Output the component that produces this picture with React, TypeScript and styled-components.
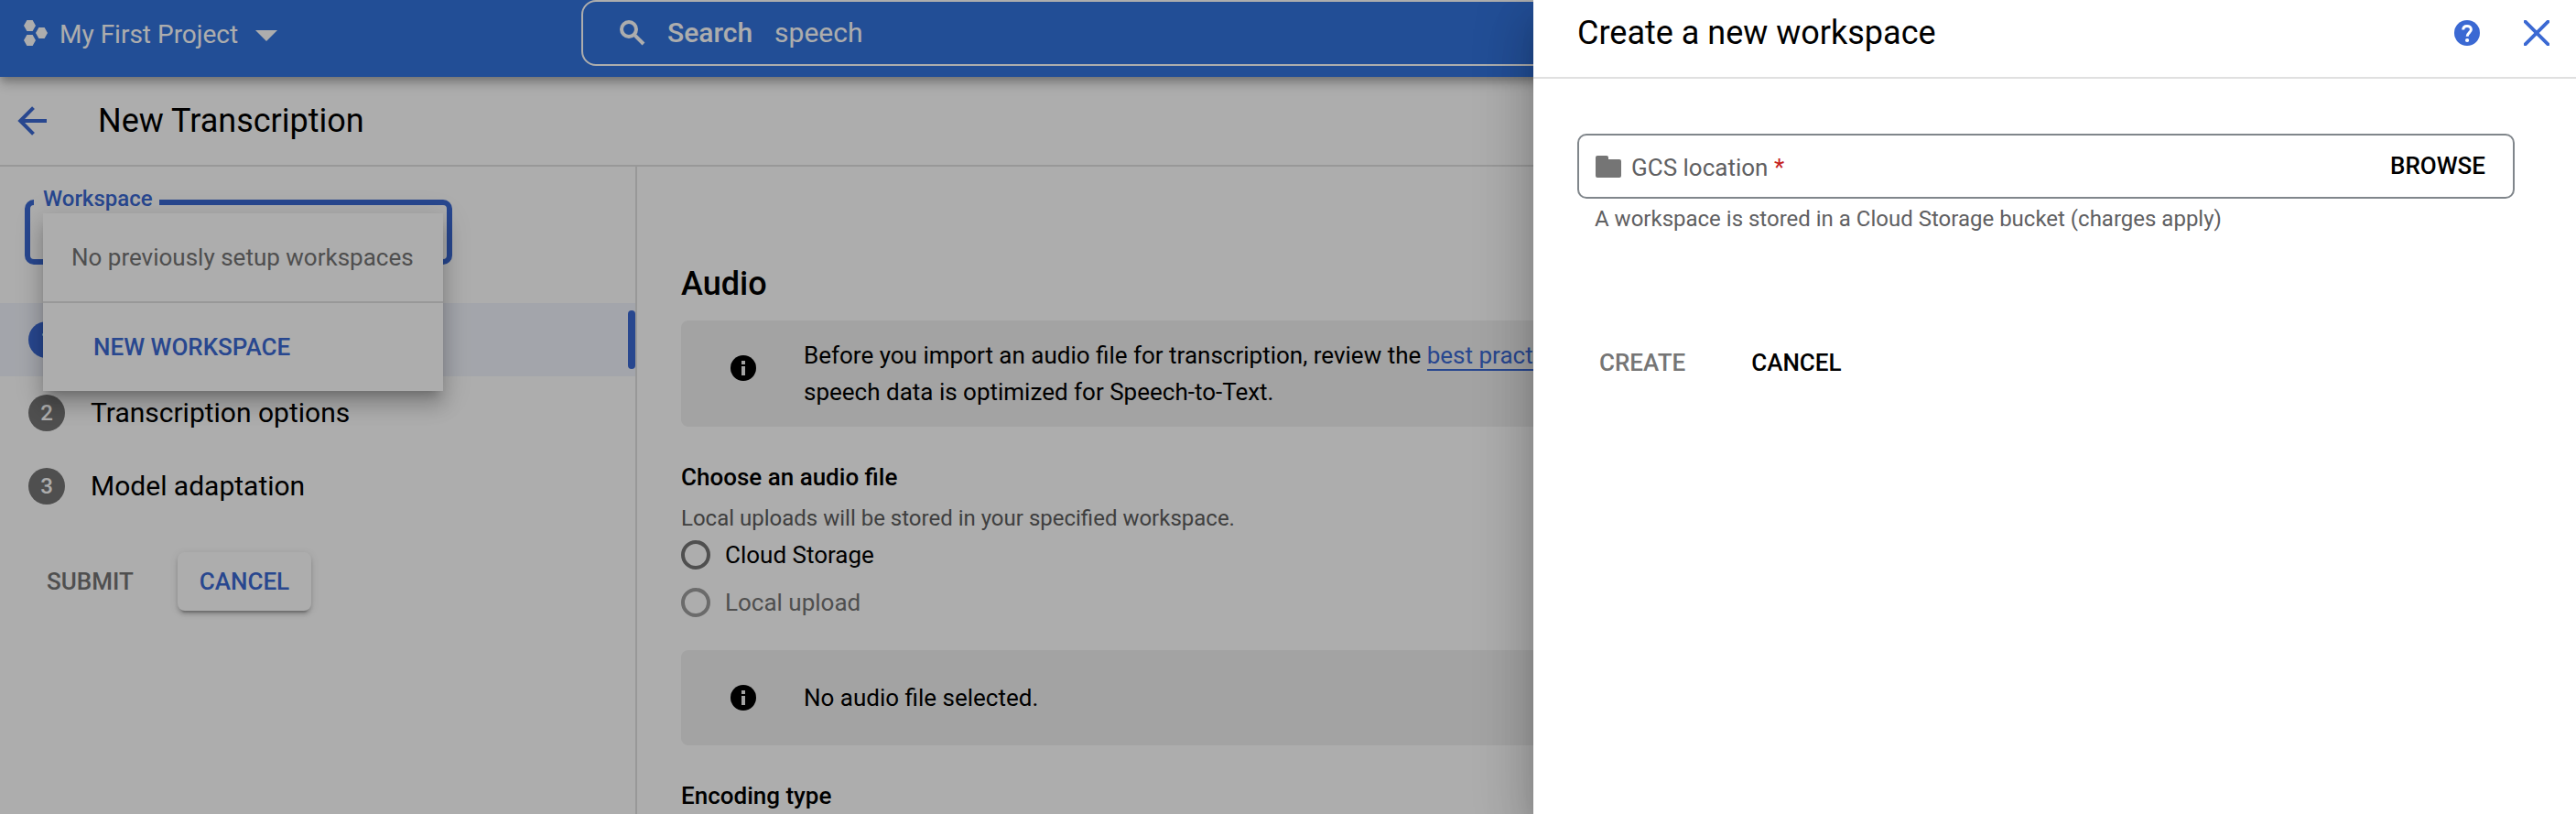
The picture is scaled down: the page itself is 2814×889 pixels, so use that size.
import React from "react";
import styled, { createGlobalStyle, css } from "styled-components";

const GlobalStyle = createGlobalStyle`
  *, *::before, *::after { box-sizing: border-box; }
  body { margin: 0; overflow: hidden; background: #fff; }
  button { font: inherit; border: 0; background: none; margin: 0; }
`;

const blue = "#3b69d3";
const grey = "#757575";
const line = "#e0e0e0";

const Page = styled.div`
  position: relative;
  display: flex;
  flex-direction: column;
  width: 100%;
  height: 889px;
  overflow: hidden;
  background: #fff;
  color: #000;
  font-family: Roboto, "Liberation Sans", sans-serif;
  font-size: 26px;
  line-height: 40px;
`;

const TopBar = styled.header`
  display: flex;
  flex: none;
  align-items: flex-start;
  height: 84px;
  background: #3374de;
  color: #fff;
  z-index: 1;
  box-shadow: 0 4px 8px -2px rgba(0, 0, 0, 0.2), 0 8px 10px 0 rgba(0, 0, 0, 0.14),
    0 2px 20px 0 rgba(0, 0, 0, 0.12);
`;

const ProjectPicker = styled.div`
  display: flex;
  align-items: center;
  width: 635px;
  height: 72px;
  padding-left: 26px;
`;

const ProjectName = styled.span`
  margin: 3px 19px 0 13px;
  font-size: 28px;
`;

const SearchBox = styled.div`
  display: flex;
  flex: 1;
  align-items: center;
  height: 72px;
  padding-left: 40px;
  border: 2px solid #fff;
  border-radius: 16px;
  font-size: 30px;
`;

const SearchLabel = styled.span`
  margin: 0 24px 0 24px;
  font-weight: 500;
`;

const TitleBar = styled.div`
  display: flex;
  flex: none;
  align-items: center;
  gap: 56px;
  height: 98px;
  padding: 0 19px;
  border-bottom: 2px solid ${line};
`;

const Title = styled.h1`
  margin: 0;
  font-size: 36px;
  font-weight: 400;
`;

const Body = styled.div`
  display: flex;
  flex: 1;
  min-height: 0;
`;

const Sidebar = styled.nav`
  flex: none;
  width: 696px;
  padding-top: 36px;
  border-right: 2px solid ${line};
`;

const WorkspaceSelect = styled.div`
  position: relative;
  width: 467px;
  height: 71px;
  margin: 0 0 42px 27px;
  border: 6px solid ${blue};
  border-radius: 10px;
`;

const FloatingLabel = styled.label`
  position: absolute;
  top: -27px;
  left: 4px;
  width: 137px;
  height: 40px;
  padding-left: 10px;
  background: #fff;
  color: ${blue};
  font-size: 24px;
  font-weight: 500;
  line-height: 40px;
`;

const Menu = styled.div`
  position: absolute;
  top: 9px;
  left: 14px;
  z-index: 2;
  width: 437px;
  background: #fff;
  box-shadow: 0 10px 10px -6px rgba(0, 0, 0, 0.2), 0 16px 20px 2px rgba(0, 0, 0, 0.14),
    0 6px 28px 4px rgba(0, 0, 0, 0.12);
`;

const MenuNote = styled.div`
  height: 98px;
  padding: 28px 0 0 31px;
  border-bottom: 2px solid ${line};
  color: ${grey};
`;

const MenuAction = styled.button`
  display: block;
  width: 100%;
  height: 96px;
  padding: 0 0 0 55px;
  color: ${blue};
  font-weight: 500;
  text-align: left;
`;

const Step = styled.div<{ $active?: boolean }>`
  display: flex;
  align-items: center;
  justify-content: space-between;
  height: 80px;
  padding-left: 31px;
  background: ${(p) => (p.$active ? "#f1f4fc" : "transparent")};
`;

const StepLabel = styled.div`
  display: flex;
  align-items: center;
  gap: 28px;
  font-size: 30px;
`;

const StepNumber = styled.span<{ $active?: boolean }>`
  width: 40px;
  height: 40px;
  border-radius: 50%;
  background: ${(p) => (p.$active ? blue : grey)};
  color: #fff;
  font-size: 24px;
  font-weight: 500;
  line-height: 41px;
  text-align: center;
`;

const ActiveMark = styled.span`
  width: 8px;
  height: 64px;
  border-radius: 4px;
  background: ${blue};
`;

const Actions = styled.div<{ $top: number; $left: number }>`
  display: flex;
  gap: 24px;
  margin: ${(p) => p.$top}px 0 0 ${(p) => p.$left}px;
`;

const Button = styled.button<{ $tone?: string; $raised?: boolean }>`
  height: 64px;
  padding: 0 24px;
  border-radius: 8px;
  color: ${(p) => p.$tone ?? "#000"};
  font-weight: 500;
  ${(p) =>
    p.$raised &&
    css`
      background: #fff;
      box-shadow: 0 6px 2px -4px rgba(0, 0, 0, 0.2), 0 4px 4px 0 rgba(0, 0, 0, 0.14),
        0 2px 10px 0 rgba(0, 0, 0, 0.12);
    `}
`;

const Main = styled.main`
  flex: 1;
  min-width: 0;
  padding: 108px 48px 0;
`;

const SectionTitle = styled.h2`
  margin: 0 0 20px;
  font-size: 36px;
  font-weight: 500;
  line-height: 40px;
`;

const FieldTitle = styled.h3`
  margin: 35px 0 5px;
  font-size: 26px;
  font-weight: 500;
  line-height: 40px;
`;

const FieldNote = styled.p`
  margin: 0 0 4px;
  color: #5e5e5e;
  font-size: 24px;
`;

const Notice = styled.section`
  display: flex;
  align-items: flex-start;
  min-height: 104px;
  padding-left: 54px;
  border-radius: 8px;
  background: #f0f0f0;

  svg {
    flex: none;
    margin: 38px 52px 0 0;
  }
`;

const NoticeText = styled.p<{ $single?: boolean }>`
  margin: 0;
  padding: ${(p) => (p.$single ? 32 : 18)}px 0;
`;

const Link = styled.a`
  border-bottom: 2px solid ${blue};
  color: ${blue};
`;

const RadioRow = styled.label<{ $disabled?: boolean }>`
  display: flex;
  align-items: center;
  gap: 16px;
  height: 32px;
  margin-bottom: ${(p) => (p.$disabled ? 36 : 20)}px;
  color: ${(p) => (p.$disabled ? grey : "#000")};
`;

const Radio = styled.span<{ $disabled?: boolean }>`
  width: 32px;
  height: 32px;
  border: 4px solid ${(p) => (p.$disabled ? "#9e9e9e" : grey)};
  border-radius: 50%;
`;

const Scrim = styled.div`
  position: absolute;
  inset: 0;
  z-index: 3;
  background: rgba(0, 0, 0, 0.32);
`;

const Panel = styled.aside`
  position: absolute;
  top: 0;
  right: 0;
  bottom: 0;
  z-index: 4;
  width: 1139px;
  background: #fff;
  box-shadow: 0 16px 20px -10px rgba(0, 0, 0, 0.2), 0 32px 48px 4px rgba(0, 0, 0, 0.14),
    0 12px 60px 10px rgba(0, 0, 0, 0.12);
`;

const PanelHeader = styled.div`
  display: flex;
  align-items: center;
  height: 86px;
  padding: 0 29px 12px 48px;
  border-bottom: 2px solid ${line};
`;

const PanelTitle = styled(Title)`
  flex: 1;
`;

const IconGroup = styled.div`
  display: flex;
  gap: 48px;
`;

const LocationField = styled.div`
  display: flex;
  align-items: center;
  width: 1024px;
  height: 71px;
  margin: 60px 0 0 48px;
  padding: 0 30px 0 18px;
  border: 2px solid #80868b;
  border-radius: 10px;
`;

const LocationLabel = styled.span`
  flex: 1;
  margin: 3px 0 0 11px;
  color: #5f6062;
`;

const Required = styled.span`
  color: #c5221f;
`;

const Browse = styled.button`
  margin-bottom: 1px;
  padding: 0;
  font-weight: 500;
`;

const Hint = styled.p`
  margin: 2px 0 0 67px;
  color: #5f6062;
  font-size: 24px;
`;

const ProjectIcon = () => (
  <svg width="26" height="28" viewBox="0 0 26 28" fill="#fff">
    <path d="M3.4 0h6.2L13 6l-3.4 6H3.4L0 6zM16.4 8h6.2l3.4 6-3.4 6h-6.2L13 14zM3.4 16h6.2l3.4 6-3.4 6H3.4L0 22z" />
  </svg>
);

const CaretIcon = () => (
  <svg width="24" height="12" viewBox="0 0 24 12" fill="#fff">
    <path d="M0 0h24L12 12z" transform="translate(0 0)" />
  </svg>
);

const Caret = styled.span`
  display: flex;
  padding-top: 6px;
`;

const SearchIcon = () => (
  <svg width="28" height="28" viewBox="0 0 28 28" fill="none" stroke="#fff" strokeWidth="4">
    <circle cx="10" cy="10" r="8" />
    <path d="M15.6 15.6l10.4 10.4" />
  </svg>
);

const BackIcon = () => (
  <svg width="32" height="32" viewBox="0 0 32 32" fill="none" stroke={blue} strokeWidth="4">
    <path d="M32 16H4M17.5 1.7L3.2 16l14.3 14.3" />
  </svg>
);

const InfoIcon = () => (
  <svg width="28" height="28" viewBox="0 0 28 28">
    <circle cx="14" cy="14" r="14" fill="#000" />
    <path d="M12 6h4v4h-4zM12 12h4v10h-4z" fill="#f0f0f0" />
  </svg>
);

const HelpIcon = () => (
  <svg width="28" height="28" viewBox="0 0 28 28">
    <circle cx="14" cy="14" r="14" fill={blue} />
    <path
      d="M9.7 10.6C9.7 8 11.5 6.4 14 6.4s4.4 1.5 4.4 3.8c0 3.3-4.2 3.6-4.2 7.6"
      fill="none"
      stroke="#fff"
      strokeWidth="3"
    />
    <circle cx="14.1" cy="22" r="2.1" fill="#fff" />
  </svg>
);

const CloseIcon = () => (
  <svg width="28" height="28" viewBox="0 0 28 28" fill="none" stroke={blue} strokeWidth="3.8">
    <path d="M1.6 1.6l24.8 24.8M26.4 1.6L1.6 26.4" strokeLinecap="round" />
  </svg>
);

const FolderIcon = () => (
  <svg width="28" height="24" viewBox="0 0 28 24" fill={grey}>
    <path d="M2 0h10a2 2 0 0 1 2 2v2h12a2 2 0 0 1 2 2v16a2 2 0 0 1-2 2H2a2 2 0 0 1-2-2V2a2 2 0 0 1 2-2z" />
  </svg>
);

export default function App() {
  return (
    <Page>
      <GlobalStyle />
      <TopBar>
        <ProjectPicker>
          <ProjectIcon />
          <ProjectName>My First Project</ProjectName>
          <Caret>
            <CaretIcon />
          </Caret>
        </ProjectPicker>
        <SearchBox>
          <SearchIcon />
          <SearchLabel>Search</SearchLabel>
          <span>speech</span>
        </SearchBox>
      </TopBar>

      <TitleBar>
        <BackIcon />
        <Title>New Transcription</Title>
      </TitleBar>

      <Body>
        <Sidebar>
          <WorkspaceSelect>
            <FloatingLabel>Workspace</FloatingLabel>
            <Menu>
              <MenuNote>No previously setup workspaces</MenuNote>
              <MenuAction>NEW WORKSPACE</MenuAction>
            </Menu>
          </WorkspaceSelect>
          <Step $active>
            <StepNumber $active>1</StepNumber>
            <ActiveMark />
          </Step>
          <Step>
            <StepLabel>
              <StepNumber>2</StepNumber>
              Transcription options
            </StepLabel>
          </Step>
          <Step>
            <StepLabel>
              <StepNumber>3</StepNumber>
              Model adaptation
            </StepLabel>
          </Step>
          <Actions $top={32} $left={27}>
            <Button $tone={grey}>SUBMIT</Button>
            <Button $tone={blue} $raised>
              CANCEL
            </Button>
          </Actions>
        </Sidebar>

        <Main>
          <SectionTitle>Audio</SectionTitle>
          <Notice>
            <InfoIcon />
            <NoticeText>
              Before you import an audio file for transcription, review the <Link>best practices</Link>
              <br />
              speech data is optimized for Speech-to-Text.
            </NoticeText>
          </Notice>
          <FieldTitle>Choose an audio file</FieldTitle>
          <FieldNote>Local uploads will be stored in your specified workspace.</FieldNote>
          <RadioRow>
            <Radio />
            Cloud Storage
          </RadioRow>
          <RadioRow $disabled>
            <Radio $disabled />
            Local upload
          </RadioRow>
          <Notice>
            <InfoIcon />
            <NoticeText $single>No audio file selected.</NoticeText>
          </Notice>
          <FieldTitle>Encoding type</FieldTitle>
        </Main>
      </Body>

      <Scrim />

      <Panel>
        <PanelHeader>
          <PanelTitle>Create a new workspace</PanelTitle>
          <IconGroup>
            <HelpIcon />
            <CloseIcon />
          </IconGroup>
        </PanelHeader>
        <LocationField>
          <FolderIcon />
          <LocationLabel>
            GCS location <Required>*</Required>
          </LocationLabel>
          <Browse>BROWSE</Browse>
        </LocationField>
        <Hint>A workspace is stored in a Cloud Storage bucket (charges apply)</Hint>
        <Actions $top={105} $left={48}>
          <Button $tone={grey}>CREATE</Button>
          <Button>CANCEL</Button>
        </Actions>
      </Panel>
    </Page>
  );
}
